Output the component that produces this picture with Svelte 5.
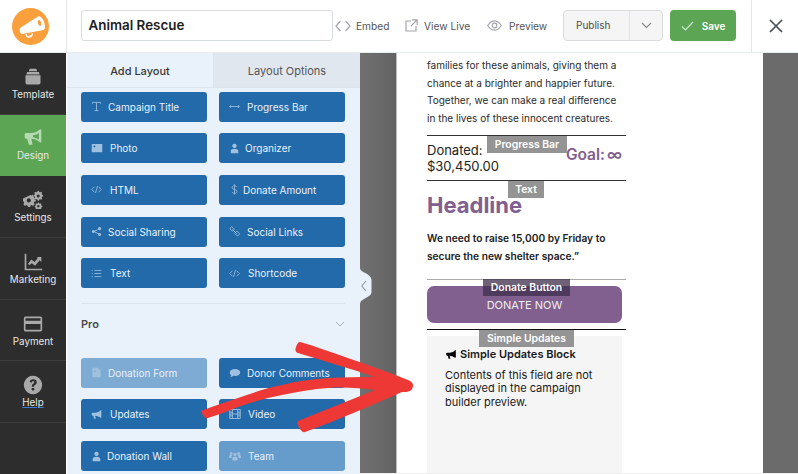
<script>
	// d = svg path in a 16x16 box, s = stroked rather than filled, w = room kept for the icon
	const icons = {
		title: { d: 'M2 4V2h12v2M8 2v12M5 14h6', s: true },
		bar: { d: 'M1 8h14M3 6L1 8l2 2M13 6l2 2-2 2', s: true },
		photo: { d: 'M1 2.500h14v11H1zM2.500 12l4-4 2.500 2 2-2 2.500 4zM4.500 4.500a1.300 1.300 0 1 0 .01 0z' },
		person: { d: 'M8 1a3.200 3.200 0 1 1-.01 0zM2.500 15v-3.500C2.500 9.500 5 8.300 8 8.300s5.500 1.200 5.500 3.200V15z' },
		code: { d: 'M5 4L1 8l4 4M11 4l4 4-4 4M9.500 3l-3 10', s: true },
		dollar: { d: 'M11.500 4.500C11 3 9.500 2.500 8 2.500c-2 0-3.500 1-3.500 2.700C4.500 9 11.500 7 11.500 10.800c0 1.700-1.500 2.700-3.500 2.700-1.500 0-3-.5-3.500-2M8 .5v15', s: true },
		share: { d: 'M12.500 1.500a2.300 2.300 0 1 1-.01 0zM3.500 5.700a2.300 2.300 0 1 1-.01 0zM12.500 10a2.300 2.300 0 1 1-.01 0zM5 7l6-3 .5 1-6 3zM5.500 8l6 3-.5 1-6-3z' },
		link: { d: 'M2 2.500a2.500 2.500 0 0 1 4 0l1 1a2.500 2.500 0 0 1-3 3.500l-1-1a2.500 2.500 0 0 1-1-3.500zM9.500 9a2.500 2.500 0 0 1 4 0l1 1a2.500 2.500 0 0 1-3.500 3.500l-1.500-1A2.500 2.500 0 0 1 9.500 9zM5 5l6 6', s: true },
		list: { d: 'M1 3.500h1.500M5 3.500h10M1 8h1.500M5 8h10M1 12.500h1.500M5 12.500h10', s: true },
		form: { d: 'M2 1h8l4 4v10H2zM4 12.500l2.500-3 2 2 1.500-1 2 2zM5.500 5a1.200 1.200 0 1 0 .01 0z' },
		comment: { d: 'M8 2.500c4 0 7 2 7 4.700s-3 4.700-7 4.700c-.8 0-1.500-.1-2.200-.2C4.500 13 3 13.500 1.500 13.500c1-.8 1.500-1.600 1.500-2.700C1.800 9.900 1 8.600 1 7.200 1 4.500 4 2.500 8 2.500z' },
		horn: { d: 'M15 1.500v11l-1 .3C11 10.500 8.500 9.800 6 9.700L7 14H4.500l-1-4.300H2L1 8.500v-2l1-1.200h4c2.500 0 5-.8 8-3.500z' },
		film: { d: 'M1 2h14v12H1zM4.500 2v12M11.500 2v12M1 5.500h3.500M1 8h3.500M1 10.500h3.500M11.500 5.500H15M11.500 8H15M11.500 10.500H15M4.500 8h7', s: true },
		team: { d: 'M8 3.500a2.300 2.300 0 1 1-.01 0zM3 2.500a2 2 0 1 1-.01 0zM13 2.500a2 2 0 1 1-.01 0zM4.500 14v-2.500C4.500 9.500 6 8.500 8 8.500s3.500 1 3.500 3V14zM0 10.500V9c0-1.500 1-2.300 3-2.300.6 0 1 .1 1.500.3-.8.8-1.200 1.800-1.200 3.500zM16 10.500V9c0-1.500-1-2.300-3-2.300-.6 0-1 .1-1.500.3.800.8 1.200 1.800 1.200 3.500z' }
	};

	const basic = [
		['Campaign Title', 'title', 17, 11], ['Progress Bar', 'bar', 18, 11],
		['Photo', 'photo', 19, 12], ['Organizer', 'person', 16, 11],
		['HTML', 'code', 19, 11], ['Donate Amount', 'dollar', 14, 11],
		['Social Sharing', 'share', 17, 11], ['Social Links', 'link', 18, 11],
		['Text', 'list', 19, 11], ['Shortcode', 'code', 19, 11]
	];
	const pro = [
		['Donation Form', 'form', 17, 11, true], ['Donor Comments', 'comment', 18, 12],
		['Updates', 'horn', 19, 11], ['Video', 'film', 19, 12],
		['Donation Wall', 'person', 16, 11], ['Team', 'team', 19, 12, true]
	];
	const nav = [
		{ label: 'Template', d: 'M8 2h8l1 3H7zM5 6h14l1 3H4zM3 10h18v9a2 2 0 0 1-2 2H5a2 2 0 0 1-2-2z' },
		{ label: 'Design', on: true, d: 'M22 2v15l-1.500.5C17 14 13 13 10 13l1.500 7H7L5 13H3l-1-1.500v-4L3 6h7c3 0 7-1 10.500-4.500zM19 6c-2.500 1.800-5 2.500-7 2.800v2.300c2 .3 4.500 1 7 2.900z' },
		{ label: 'Settings', d: 'M9 6l1.500.5 1.500-1 2 2-1 1.500.5 1.500 1.800.4v2.800l-1.800.4-.5 1.500 1 1.500-2 2-1.500-1-1.500.5-.4 1.800H5.800l-.4-1.800-1.500-.5-1.500 1-2-2 1-1.500-.5-1.500L-.4 13v-2.500zM7 10a2.500 2.500 0 1 0 .01 0zM19 1l.5 1.300 1.300.5 1.200-.6 1 1-.6 1.200.5 1.300 1.300.5v1.400l-1.300.5-.5 1.300.6 1.200-1 1-1.200-.6-1.300.5-.5 1.300h-1.400l-.5-1.300-1.300-.5-1.200.6-1-1 .6-1.200-.5-1.300-1.300-.5V6.200l1.300-.5.5-1.300-.6-1.200 1-1 1.200.6 1.300-.5.5-1.300zM18.300 5.500a1.700 1.700 0 1 0 .01 0zM19 15l.4 1 1 .4 1-.4.8.8-.4 1 .4 1 1 .4v1.200l-1 .4-.4 1 .4 1H15l.4-1-.4-1-1-.4v-1.200l1-.4.4-1-.4-1 .8-.8 1 .4 1-.4.400-1zM18.400 18a1.400 1.400 0 1 0 .01 0z' },
		{ label: 'Marketing', d: 'M2 2h2v18h19v2H2zM6 14l4-5 4 3 4-5-2-1h6v6l-2-2-5.500 6.500-4-3L7.500 16z' },
		{ label: 'Payment', d: 'M3 3h18a2 2 0 0 1 2 2v14a2 2 0 0 1-2 2H3a2 2 0 0 1-2-2V5a2 2 0 0 1 2-2zm0 2v3h18V5zm0 7v7h18v-7z' },
		{ label: 'Help', link: true, d: 'M12 1a11 11 0 1 1-.01 0zM11 15.500a1.700 1.700 0 1 0 2 0zM8 8.500l2.500.7c.2-1 .8-1.600 1.600-1.600.9 0 1.500.5 1.500 1.200 0 1.500-3 1.700-3 4.700v.5h2.700c0-2.300 3.200-2.500 3.200-5.400 0-2-1.800-3.400-4.300-3.400-2.300 0-3.800 1.100-4.200 3.300z' }
	];
</script>

{#snippet block(list)}
	<div class="blocks">
		{#each list as [label, icon, w, size, dim]}
			<div class="block" class:dim class:faded={dim && label === 'Team'}>
				<span class="slot" style:width="{w}px">
					<svg width={size} height={size} viewBox="0 0 16 16" class={icons[icon].s ? 'line' : 'solid'}><path d={icons[icon].d} /></svg>
				</span>
				{label}
			</div>
		{/each}
	</div>
{/snippet}

<div class="app">
	<header>
		<div class="logo">
			<svg width="37" height="37" viewBox="0 0 37 37">
				<circle cx="18.500" cy="18.500" r="18.500" fill="#f99f3c" />
				<path d="M8 20L26 8.500c3-1 5.500 3.500 6.500 7s.5 6-1 6.500L10 26c-2 0-3-4-2-6z" fill="#fff" />
				<ellipse cx="27.500" cy="15" rx="1.600" ry="3" fill="#f99f3c" transform="rotate(-18 27.500 15)" />
				<path d="M14 26c.5 4 5.500 4 6.500-.5" fill="none" stroke="#fff" stroke-width="1.500" />
			</svg>
		</div>
		<div class="bar">
			<div class="title">Animal Rescue</div>
			<span class="action code">
				<svg width="16" height="12" viewBox="0 0 16 12"><path d="M5.500 1L1 6l4.500 5M10.500 1L15 6l-4.500 5" /></svg>
				Embed
			</span>
			<span class="action live">
				<svg width="13" height="13" viewBox="0 0 13 13"><path d="M6 2H1v10h10V7M7 .8h5.200V6M12 1L6 7" /></svg>
				View Live
			</span>
			<span class="action preview">
				<svg width="15" height="11" viewBox="0 0 15 11"><path d="M.7 5.500C3 2 5 .8 7.500.8s4.500 1.200 6.800 4.700C12 9 10 10.200 7.500 10.200S3 9 .7 5.500z" /><circle cx="7.500" cy="5.500" r="2.300" /></svg>
				Preview
			</span>
			<div class="publish">
				<span class="pub-label">Publish</span>
				<span class="pub-caret"><svg width="11" height="7" viewBox="0 0 11 7"><path d="M1 1l4.500 4.500L10 1" /></svg></span>
			</div>
			<div class="save">
				<svg width="13" height="10" viewBox="0 0 13 10"><path d="M1 5.500L4.500 9 12 1" /></svg>
				Save
			</div>
		</div>
		<div class="close">
			<svg width="14" height="14" viewBox="0 0 14 14"><path d="M1 1l12 12M13 1L1 13" /></svg>
		</div>
	</header>

	<div class="main">
		<nav>
			{#each nav as item}
				<div class="nav-item" class:on={item.on}>
					<svg width="20" height="20" viewBox="0 0 24 24"><path d={item.d} fill-rule="evenodd" /></svg>
					<span class:help={item.link}>{item.label}</span>
				</div>
			{/each}
		</nav>

		<aside>
			<div class="tabs">
				<div class="tab active">Add Layout</div>
				<div class="tab">Layout Options</div>
			</div>
			{@render block(basic)}
			<div class="pro-head">
				<strong>Pro</strong>
				<svg width="10" height="6" viewBox="0 0 10 6"><path d="M1 1l4 4 4-4" /></svg>
			</div>
			{@render block(pro)}
			<svg class="collapse" width="12" height="36" viewBox="0 0 12 36">
				<path class="bump" d="M0 0C0 5 11.500 5 11.500 12V24C11.500 30 0 30 0 36Z" />
				<path class="chev" d="M6 13L1.800 18 6 23" />
			</svg>
		</aside>

		<section class="stage">
			<div class="page">
				<div class="column">
					<p class="intro">families for these animals, giving them a chance at a brighter and happier future. Together, we can make a real difference in the lives of these innocent creatures.</p>

					<div class="field progress">
						<span class="tag tag-progress">Progress Bar</span>
						<div class="donated">Donated:<br />$30,450.00</div>
						<div class="goal">Goal:<span>∞</span></div>
					</div>

					<div class="field text">
						<span class="tag tag-text">Text</span>
						<h1>Headline</h1>
						<p>We need to raise 15,000 by Friday to secure the new shelter space.”</p>
					</div>

					<div class="field donate">
						<span class="tag tag-donate">Donate Button</span>
						<div class="donate-btn">DONATE NOW</div>
					</div>

					<div class="field updates">
						<span class="tag tag-updates">Simple Updates</span>
						<div class="updates-box">
							<h2>
								<svg width="12" height="11" viewBox="0 0 16 16"><path d={icons.horn.d} /></svg>
								Simple Updates Block
							</h2>
							<p>Contents of this field are not displayed in the campaign builder preview.</p>
						</div>
					</div>
				</div>
			</div>
		</section>
	</div>

	<svg class="arrow" width="798" height="474" viewBox="0 0 798 474">
		<path d="M201 411C213 406 226 402 238 398C252 393 267 388 282 385C297 381 313 379 328 378C343 377 360 377 375 377C349 368 323 361 298 353C295 352 295 349 296 347C297 344 298 342 300 342C315 346 330 352 345 357C366 364 388 372 408 380C411 381 413 383 413 385C413 388 412 390 410 391C408 392 405 392 402 392C370 406 338 420 305 432C302 433 299 428 298 425C297 423 297 422 298 421C323 411 350 400 375 390C360 388 344 387 328 388C313 389 297 392 282 395C267 398 252 402 238 407C228 411 218 415 208 418C205 419 203 416 202 413Z" fill="#ee3835" />
	</svg>
</div>

<style>
	:global(body) {
		margin: 0;
		background: #fff;
	}
	.app {
		position: relative;
		width: 798px;
		height: 474px;
		overflow: hidden;
		font-family: Inter, "Liberation Sans", sans-serif;
		color: #333;
	}
	header {
		display: flex;
		height: 53px;
		box-sizing: border-box;
		border-bottom: 1px solid #e8ebef;
	}
	.logo {
		width: 67px;
		box-sizing: border-box;
		border-right: 1px solid #e4e6e9;
		display: flex;
		align-items: center;
		justify-content: center;
		padding-right: 5px;
	}
	.bar {
		flex: 1;
		display: flex;
		align-items: center;
		padding-left: 14px;
		padding-bottom: 1px;
	}
	.title {
		width: 252px;
		height: 31px;
		box-sizing: border-box;
		border: 1px solid #d8dbdf;
		border-radius: 3px;
		padding-left: 6.500px;
		font-size: 13.400px;
		line-height: 29px;
		font-weight: 600;
		color: #1d1d1d;
	}
	.action {
		display: flex;
		align-items: center;
		font-size: 10.200px;
		color: #555;
		gap: 6px;
	}
	.action svg {
		fill: none;
		stroke: #a3a6aa;
		stroke-width: 1.200;
	}
	.code {
		margin-left: 2px;
		width: 70px;
		gap: 5px;
	}
	.live {
		width: 82px;
	}
	.preview {
		width: 76px;
		gap: 7px;
	}
	.publish {
		display: flex;
		width: 100px;
		height: 31px;
		box-sizing: border-box;
		border: 1px solid #d9dbde;
		border-radius: 4px;
		background: #f5f5f5;
		font-size: 10px;
		color: #4a4a4a;
	}
	.pub-label {
		width: 66px;
		padding-left: 12px;
		line-height: 29px;
		box-sizing: border-box;
		border-right: 1px solid #e4e4e4;
	}
	.pub-caret {
		flex: 1;
		display: flex;
		align-items: center;
		justify-content: center;
	}
	.pub-caret svg {
		fill: none;
		stroke: #8a8a8a;
		stroke-width: 1.200;
	}
	.save {
		margin-left: 7px;
		width: 66px;
		height: 31px;
		border-radius: 4px;
		background: #5ba555;
		color: #fff;
		font-size: 10px;
		font-weight: 600;
		display: flex;
		align-items: center;
		justify-content: center;
		gap: 8px;
	}
	.save svg {
		fill: none;
		stroke: #cfe6cd;
		stroke-width: 1.200;
	}
	.close {
		width: 47px;
		box-sizing: border-box;
		border-left: 1px solid #e4e6e9;
		display: flex;
		align-items: center;
		justify-content: center;
		padding-left: 2px;
	}
	.close svg {
		fill: none;
		stroke: #4a4f55;
		stroke-width: 1.700;
	}
	.main {
		display: flex;
		height: 421px;
	}
	nav {
		width: 66px;
		background: #2d2d2d;
	}
	.nav-item {
		height: 61.700px;
		box-sizing: border-box;
		border-bottom: 1px solid #3d3d3d;
		display: flex;
		flex-direction: column;
		align-items: center;
		padding-top: 14px;
		gap: 2px;
		font-size: 9.800px;
		color: #e8e8e8;
	}
	.nav-item svg {
		fill: #a9a9a9;
	}
	.nav-item.on {
		background: #5ba555;
		border-bottom-color: #5ba555;
		padding-top: 13px;
	}
	.nav-item.on svg {
		fill: #b5dab2;
	}
	.help {
		text-decoration: underline;
		text-decoration-color: #3a7bd5;
	}
	aside {
		position: relative;
		width: 293px;
		margin-left: 1px;
		background: #e9f1fb;
	}
	.tabs {
		display: flex;
		height: 35px;
		margin-bottom: 3.500px;
		box-sizing: border-box;
		border-bottom: 1px solid #dde4ec;
	}
	.tab {
		flex: 1;
		display: flex;
		align-items: center;
		justify-content: center;
		padding-top: 1px;
		font-size: 11px;
		background: #e0e7ef;
		color: #555;
	}
	.tab.active {
		background: #e9f1fb;
		border-right: 1px solid #dde4ec;
		color: #3a3a3a;
		font-weight: 500;
	}
	.blocks {
		display: grid;
		grid-template-columns: 126px 126px;
		column-gap: 12px;
		row-gap: 11.700px;
		padding-left: 14px;
	}
	.block {
		height: 30px;
		box-sizing: border-box;
		display: flex;
		align-items: center;
		padding-left: 10px;
		border-radius: 3px;
		background: #226aaa;
		color: #e9f1fb;
		font-size: 10px;
		white-space: nowrap;
	}
	.block.dim {
		background: #7dabd3;
	}
	.block.faded {
		background: #659ccb;
	}
	.slot {
		display: flex;
		align-items: center;
		flex: none;
	}
	.slot .solid {
		fill: #9fc0de;
	}
	.slot .line {
		fill: none;
		stroke: #9fc0de;
		stroke-width: 1.200;
	}
	.pro-head {
		display: flex;
		align-items: center;
		justify-content: space-between;
		margin: 14.500px 14px 0;
		width: 264px;
		height: 55px;
		padding-bottom: 13px;
		box-sizing: border-box;
		border-top: 1px solid #dde4ec;
		font-size: 11px;
		color: #4a4a4a;
	}
	.pro-head strong {
		font-weight: 600;
	}
	.pro-head svg {
		fill: none;
		stroke: #a3adb8;
		stroke-width: 1;
	}
	.collapse {
		position: absolute;
		left: 293px;
		top: 215px;
	}
	.bump {
		fill: #e9f1fb;
	}
	.chev {
		fill: none;
		stroke: #8a98a8;
		stroke-width: 1.100;
	}
	.stage {
		flex: 1;
		padding: 0 35px 0 36px;
		background: linear-gradient(90deg, #707070, #636363 37px, #6b6b6b 403px);
		display: flex;
		box-sizing: border-box;
		height: 421px;
		border-bottom: 1px solid #eee;
	}
	.page {
		flex: 1;
		background: #fff;
		padding-left: 30px;
		overflow: hidden;
		border-left: 1px solid #bbb;
	}
	.column {
		width: 199px;
		padding-top: 4px;
		color: #2a2a2a;
	}
	.intro {
		margin: 0;
		font-size: 10px;
		line-height: 17.500px;
		height: 78px;
	}
	.field {
		position: relative;
		border-top: 1px solid #333;
	}
	.tag {
		position: absolute;
		background: #949494;
		color: #fff;
		font-size: 10.400px;
		font-weight: 600;
		text-align: center;
		line-height: 17px;
		height: 17px;
		white-space: nowrap;
		z-index: 1;
	}
	.tag-progress {
		left: 60px;
		top: 0;
		width: 80px;
	}
	.tag-text {
		left: 81px;
		top: 0;
		width: 36px;
	}
	.tag-donate {
		left: 56px;
		top: -1px;
		width: 87px;
		background: rgba(60, 45, 75, 0.75);
	}
	.tag-updates {
		left: 52px;
		top: 0;
		width: 95px;
	}
	.progress {
		display: flex;
		justify-content: space-between;
		height: 45px;
		padding-top: 7px;
		box-sizing: border-box;
	}
	.donated {
		font-size: 13px;
		line-height: 15.500px;
		color: #222;
	}
	.goal {
		font-size: 15.500px;
		font-weight: 600;
		line-height: 20px;
		color: #81608f;
		margin: 2px 4px 0 0;
		display: flex;
		gap: 2px;
	}
	.text {
		height: 99px;
		box-sizing: border-box;
		padding-top: 10px;
	}
	h1 {
		margin: 0;
		font-size: 22px;
		line-height: 28px;
		font-weight: 700;
		color: #81608f;
	}
	.text p {
		margin: 11px 0 0;
		font-size: 10.200px;
		font-weight: 600;
		line-height: 17.500px;
		color: #222;
	}
	.donate {
		height: 50px;
		box-sizing: border-box;
		padding-top: 6px;
		border-top-color: #aaa;
	}
	.donate-btn {
		width: 195px;
		height: 37px;
		border-radius: 7px;
		background: #81608f;
		color: #eee;
		font-size: 11px;
		line-height: 39px;
		text-align: center;
	}
	.updates {
		border-top-color: #111;
		padding-top: 6px;
	}
	.updates-box {
		width: 195px;
		height: 160px;
		box-sizing: border-box;
		padding: 11px 0 0 18px;
		background: #f5f5f5;
		color: #1a1a1a;
	}
	h2 {
		margin: 0 0 8px;
		font-size: 11px;
		line-height: 14px;
		font-weight: 600;
		display: flex;
		align-items: center;
		gap: 3px;
	}
	.updates-box p {
		margin: 0;
		font-size: 11px;
		line-height: 13.300px;
		width: 170px;
	}
	.arrow {
		position: absolute;
		left: 0;
		top: 0;
		pointer-events: none;
	}
</style>
